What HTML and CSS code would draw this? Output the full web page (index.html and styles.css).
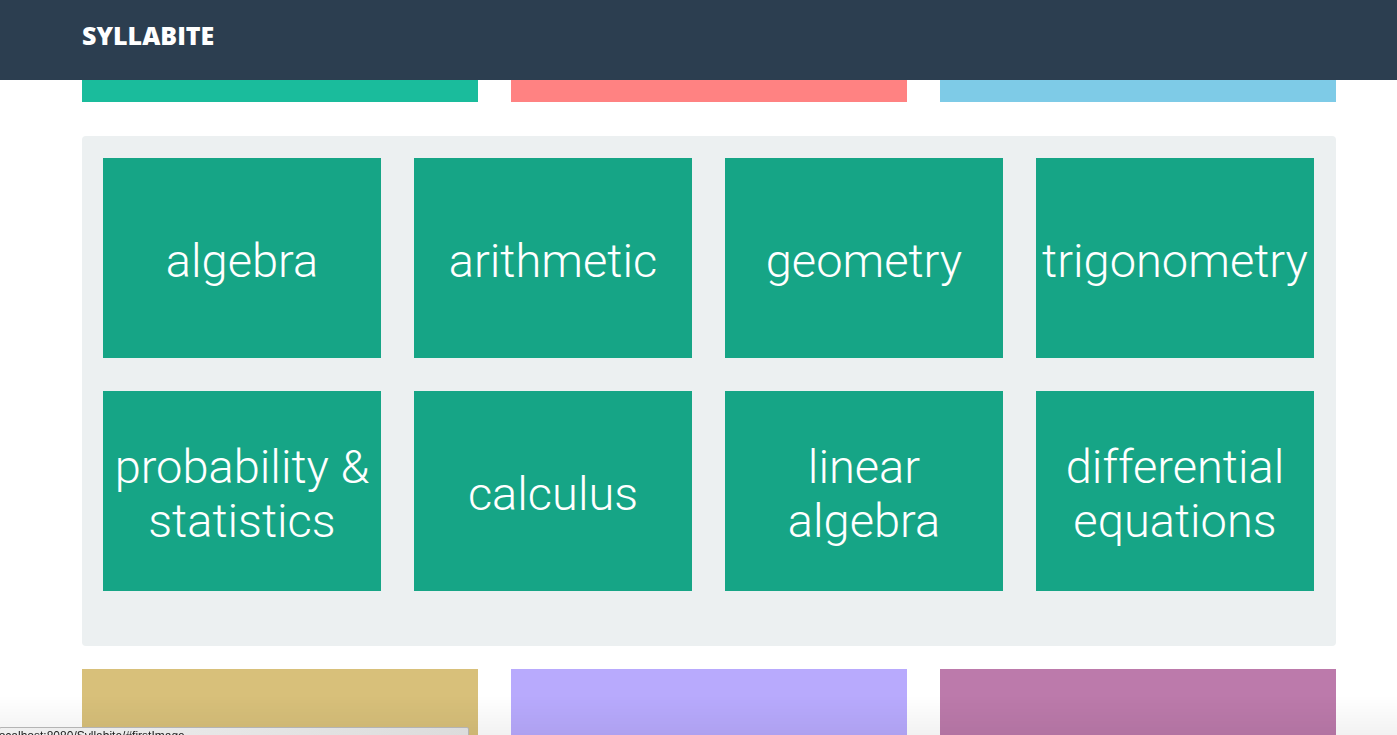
FILE: index.html
```html
<!DOCTYPE html>
<html lang="en">
<head>
  <meta charset="UTF-8">
  <meta name="viewport" content="width=device-width, initial-scale=1.0">
  <title>Syllabite</title>
  <link rel="stylesheet" href="styles.css">
</head>
<body>
  <header class="navbar">
    <a class="brand" href="#">SYLLABITE</a>
  </header>

  <div class="page">
    <div class="cards cards-top">
      <div class="card teal"></div>
      <div class="card salmon"></div>
      <div class="card sky"></div>
    </div>

    <div class="subjects">
      <a class="subject" href="#">algebra</a>
      <a class="subject" href="#">arithmetic</a>
      <a class="subject" href="#">geometry</a>
      <a class="subject" href="#">trigonometry</a>
      <a class="subject" href="#">probability &amp;<br>statistics</a>
      <a class="subject" href="#">calculus</a>
      <a class="subject" href="#">linear<br>algebra</a>
      <a class="subject" href="#">differential<br>equations</a>
    </div>

    <div class="cards cards-bottom">
      <div class="card gold"></div>
      <div class="card lavender"></div>
      <div class="card mauve"></div>
    </div>
  </div>

  <div class="fade"></div>
  <div class="status">localhost:8080/Syllabite/#firstImage</div>
</body>
</html>
```

FILE: styles.css
```css
html, body {
  margin: 0;
  padding: 0;
  height: 735px;
  overflow: hidden;
  background-color: #fff;
}
.navbar {
  height: 80px;
  background-color: #2c3e50;
  padding-left: 82px;
  display: flex;
  align-items: center;
}
.brand {
  color: #fff;
  text-decoration: none;
  font-family: "Open Sans", "Liberation Sans", sans-serif;
  font-weight: 800;
  font-size: 25px;
  letter-spacing: 0;
  margin-top: -11px;
}
.page {
  width: 1254px;
  margin-left: 82px;
}
.cards {
  display: grid;
  grid-template-columns: repeat(3, 396px);
  column-gap: 33px;
}
.cards-top .card {
  height: 22px;
}
.cards-bottom {
  margin-top: 23px;
}
.cards-bottom .card {
  height: 200px;
}
.teal { background-color: #1abc9c; }
.salmon { background-color: #ff8282; }
.sky { background-color: #7ecbe7; }
.gold { background-color: #d8c07a; }
.lavender { background-color: #b8aafd; }
.mauve { background-color: #bc7aab; }

.subjects {
  margin-top: 34px;
  background-color: #ecf0f1;
  border-radius: 4px;
  padding: 22px 22px 55px 21px;
  display: grid;
  grid-template-columns: repeat(4, 278px);
  grid-auto-rows: 200px;
  column-gap: 33px;
  row-gap: 33px;
}
.subject {
  background-color: #16a586;
  color: #fff;
  text-decoration: none;
  display: flex;
  align-items: center;
  justify-content: center;
  text-align: center;
  padding-top: 6px;
  box-sizing: border-box;
  font-family: Roboto, "Liberation Sans", sans-serif;
  font-weight: 300;
  font-size: 47px;
  line-height: 54px;
  white-space: nowrap;
}
.fade {
  position: fixed;
  left: 0;
  right: 0;
  bottom: 0;
  height: 40px;
  background: linear-gradient(rgba(0, 0, 0, 0), rgba(0, 0, 0, 0.05));
  pointer-events: none;
}
.status {
  position: fixed;
  left: -1px;
  top: 727px;
  width: 468px;
  height: 20px;
  background: linear-gradient(90deg, #f0f0f0, #dcdcdc);
  border: 1px solid #b4b4b4;
  border-radius: 2px;
  font-family: "Liberation Sans", Arial, sans-serif;
  font-size: 12px;
  line-height: 16px;
  color: #222;
  text-indent: -4px;
  overflow: hidden;
}
```
